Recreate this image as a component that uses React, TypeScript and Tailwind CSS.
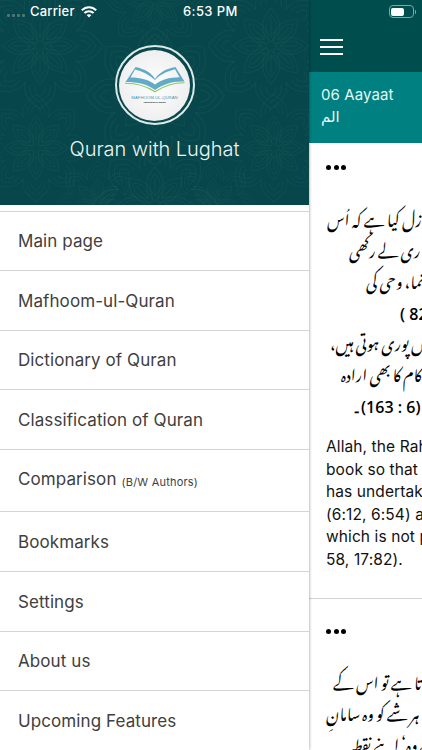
import React from 'react';

const menuItems = [
  { title: 'Main page', className: 'h-[59px] border-b' },
  { title: 'Mafhoom-ul-Quran', className: 'h-[60px] border-b' },
  { title: 'Dictionary of Quran', className: 'h-[59px] border-b' },
  { title: 'Classification of Quran', className: 'h-[60px] border-b' },
  { title: 'Comparison', note: '(B/W Authors)', className: 'h-[62px] border-b pb-[3px]' },
  { title: 'Bookmarks', className: 'h-[60px] border-b' },
  { title: 'Settings', className: 'h-[60px] border-b' },
  { title: 'About us', className: 'h-[59px] border-b' },
  { title: 'Upcoming Features', className: 'h-[59px]' },
];

const numberStyle = "pt-[9px] font-['Open_Sans',sans-serif] font-semibold text-[16px]";

const firstAyah = [
  { text: 'زل کیا ہے کہ اُس', className: 'pl-[18px]' },
  { text: 'ری لے رکھی', className: 'pl-[40px]' },
  { text: 'نما، وحی کی', className: 'pl-[57px]' },
  { text: '82 )', className: `pl-[91px] ${numberStyle}` },
  { text: 'ں پوری ہوتی ہیں،', className: 'pl-[21px]' },
  { text: 'کام کا بھی ارادہ', className: 'pl-[32px]' },
  { text: '(6 : 163)۔', className: `pl-[43px] ${numberStyle}` },
];

const secondAyah = [
  { text: 'تا ہے تو اس کے', className: 'pl-[24px]' },
  { text: 'ہر شے کو وہ سامانِ', className: 'pl-[17px]' },
  { text: 'ے وہ‘ اپنے نقطہ', className: 'pl-[41px]' },
];

const translation = [
  'Allah, the Rahman,',
  'book so that it is',
  'has undertaken',
  '(6:12, 6:54) and',
  'which is not part',
  '58, 17:82).',
];

const angles = [0, 45, 90, 135, 180, 225, 270, 315];

const Flower = ({ x, y, scale = 1 }: { x: number; y: number; scale?: number }) => (
  <g transform={`translate(${x} ${y}) scale(${scale})`}>
    {angles.map((angle) => (
      <g key={angle} transform={`rotate(${angle})`}>
        <path d="M0 -4C-12 -15 -10 -27 0 -38C10 -27 12 -15 0 -4Z" />
        <path d="M0 -9C-7 -17 -6 -25 0 -31C6 -25 7 -17 0 -9Z" />
        <path d="M-15 -36C-18 -50 -8 -57 0 -63C8 -57 18 -50 15 -36" />
        <path d="M-10 -39C-12 -48 -6 -52 0 -56C6 -52 12 -48 10 -39" />
        <path d="M-5 -41C-6 -45 -3 -48 0 -50C3 -48 6 -45 5 -41M0 -10V-27" />
      </g>
    ))}
  </g>
);

const HeaderPattern = () => (
  <svg
    className="absolute inset-0 h-full w-full"
    viewBox="0 0 309 205"
    fill="none"
    stroke="#2b6b66"
    strokeOpacity="0.22"
    strokeWidth="1.3"
  >
    <Flower x={40} y={46} />
    <Flower x={271} y={46} />
    <Flower x={155} y={96} scale={1.1} />
    <Flower x={36} y={148} scale={0.85} />
    <Flower x={274} y={148} scale={0.85} />
    <Flower x={155} y={205} />
    <Flower x={155} y={0} scale={0.8} />
    <Flower x={98} y={205} scale={0.7} />
    <Flower x={213} y={205} scale={0.7} />
  </svg>
);

const Logo = () => (
  <div className="relative flex h-20 w-20 items-center justify-center rounded-full border-[2px] border-[#dcebea]">
    <div className="flex h-[71px] w-[71px] shrink-0 flex-col items-center rounded-full bg-[radial-gradient(circle,#fafafa_20%,#e9e9ec_100%)]">
      <svg className="mt-[17px] h-[26px] w-[60px]" viewBox="0 0 60 26">
        <path
          fill="#62abc8"
          fillRule="evenodd"
          d="M10.5 0C20 2 26.5 6 30 12C34 6 41 1.5 50.5 0L59.5 14.5C47 14 39 17 30 23C22 17 13 15 .5 15Z M10 2.4L5.5 10.5C16 10.5 23 12.5 30 17.5C37 12.5 44 10.5 54.5 10.3L50 2.2C41 4.5 34.5 8 30 13C25 8 18 4.5 10 2.4Z"
        />
        <path fill="none" stroke="#8cc95c" strokeWidth="1.1" d="M0 16.3C14 16.3 22 19.5 30 24.8C38 19.5 47 15.7 59.5 15.8" />
      </svg>
      <span className="mt-[2px] whitespace-nowrap font-['Liberation_Sans'] text-[4.3px] leading-[6px] text-[#4597b9]">
        MAFHOOM-UL-QURAN
      </span>
      <span className="whitespace-nowrap font-['Liberation_Sans'] text-[2.4px] font-bold leading-[3px] text-[#222222]">
        exposition of quran
      </span>
    </div>
  </div>
);

const StatusBar = () => (
  <div className="absolute inset-x-0 top-0 z-20 flex h-[23px] items-center text-[13px] font-medium text-white">
    <div className="flex flex-1 items-center">
      <div className="ml-[7px] mt-[8px] flex w-[19px] gap-[2px]">
        <span className="h-[3px] w-[3px] rounded-[1px] bg-[#4d7776]" />
        <span className="h-[3px] w-[3px] rounded-[1px] bg-[#4d7776]" />
        <span className="h-[3px] w-[3px] rounded-[1px] bg-[#4d7776]" />
        <span className="h-[3px] w-[3px] rounded-[1px] bg-[#4d7776]" />
      </div>
      <span className="ml-[4px] w-[45px] whitespace-nowrap tracking-[0.2px]">Carrier</span>
      <svg className="ml-[6px] h-[12px] w-[16px]" viewBox="0 0 16 12" fill="none" stroke="white" strokeWidth="2.1">
        <path d="M.8 4.3C5 .2 11 .2 15.2 4.3" />
        <path d="M3.4 7.1C6 4.6 10 4.6 12.6 7.1" />
        <path d="M5.6 9.1C7 7.9 9 7.9 10.4 9.1L8 11.6Z" fill="white" stroke="none" />
      </svg>
    </div>
    <span className="w-[56px] whitespace-nowrap pl-[3px] tracking-[0.4px]">6:53 PM</span>
    <div className="flex flex-1 items-center justify-end pr-[6px]">
      <div className="h-[13px] w-[25px] rounded-[4px] border border-[#7fa6a6] p-[1.5px]">
        <div className="h-full w-[12.5px] rounded-[2px] bg-white" />
      </div>
      <span className="ml-px h-[4px] w-[1.5px] rounded-r bg-[#7fa6a6]" />
    </div>
  </div>
);

const Dots = () => (
  <div className="flex gap-[2.5px]">
    <span className="h-[5px] w-[5px] rounded-full bg-black" />
    <span className="h-[5px] w-[5px] rounded-full bg-black" />
    <span className="h-[5px] w-[5px] rounded-full bg-black" />
  </div>
);

const UrduLines = ({ lines }: { lines: { text: string; className: string }[] }) => (
  <div className="font-['Noto_Nastaliq_Urdu','Noto_Naskh_Arabic','DejaVu_Sans',serif] text-[15.7px] text-black">
    {lines.map((line) => (
      <div key={line.text} className={`flex h-[31px] items-center whitespace-nowrap ${line.className}`}>
        <span dir="rtl" lang="ur">{line.text}</span>
      </div>
    ))}
  </div>
);

const Drawer = () => (
  <aside className="relative z-10 flex h-full w-[309px] shrink-0 flex-col bg-white shadow-[0_0_3px_rgba(0,0,0,0.45)]">
    <header className="relative flex h-[205px] shrink-0 flex-col items-center bg-[#07464a] pt-[45px]">
      <HeaderPattern />
      <Logo />
      <h1 className="relative mt-[9px] whitespace-nowrap text-[20px] font-light leading-[30px] tracking-[-0.05px] text-[#edf5f4]">
        Quran with Lughat
      </h1>
    </header>
    <nav className="mt-[6px] border-t border-[#d4d4d4]">
      {menuItems.map((item) => (
        <a
          key={item.title}
          className={`flex items-center whitespace-nowrap border-[#d4d4d4] pl-[18px] text-[17px] tracking-[0.09px] text-[#404040] ${item.className}`}
        >
          <span className="mt-[2px]">{item.title}</span>
          {item.note && <span className="ml-[5px] mt-[6px] text-[11px] tracking-[0.2px]">{item.note}</span>}
        </a>
      ))}
    </nav>
  </aside>
);

const Reader = () => (
  <main className="flex h-full w-[113px] shrink-0 flex-col overflow-hidden bg-white">
    <div className="h-[72px] shrink-0 bg-[#004d4d] pl-[11px] pt-[39px]">
      <div className="flex w-[23px] flex-col gap-[5px]">
        <span className="h-[2px] bg-white" />
        <span className="h-[2px] bg-white" />
        <span className="h-[2px] bg-white" />
      </div>
    </div>
    <div className="h-[71px] shrink-0 bg-[#008080] pl-[12px] pt-[12px] text-[15px] leading-[22px] tracking-[0.1px] text-[#e5f7f7]">
      <p className="whitespace-nowrap">06 Aayaat</p>
      <p dir="rtl" className="w-fit font-['DejaVu_Sans',sans-serif] text-[15px]">الم</p>
    </div>
    <section className="h-[456px] shrink-0 border-b border-[#d4d4d4] pt-[22px]">
      <div className="pl-[17px]"><Dots /></div>
      <div className="mt-[31px]"><UrduLines lines={firstAyah} /></div>
      <div className="mt-[18px] pl-[17px] text-[15.5px] leading-[22.5px] tracking-[0.1px] text-[#111111]">
        {translation.map((line) => (
          <p key={line} className="whitespace-nowrap">{line}</p>
        ))}
      </div>
    </section>
    <section className="pt-[30px]">
      <div className="pl-[17px]"><Dots /></div>
      <div className="mt-[30px]"><UrduLines lines={secondAyah} /></div>
    </section>
  </main>
);

const App = () => {
  return (
    <div className="relative flex h-[750px] w-[422px] overflow-hidden bg-white font-['Inter',sans-serif]">
      <StatusBar />
      <Drawer />
      <Reader />
    </div>
  );
};

export default App;
